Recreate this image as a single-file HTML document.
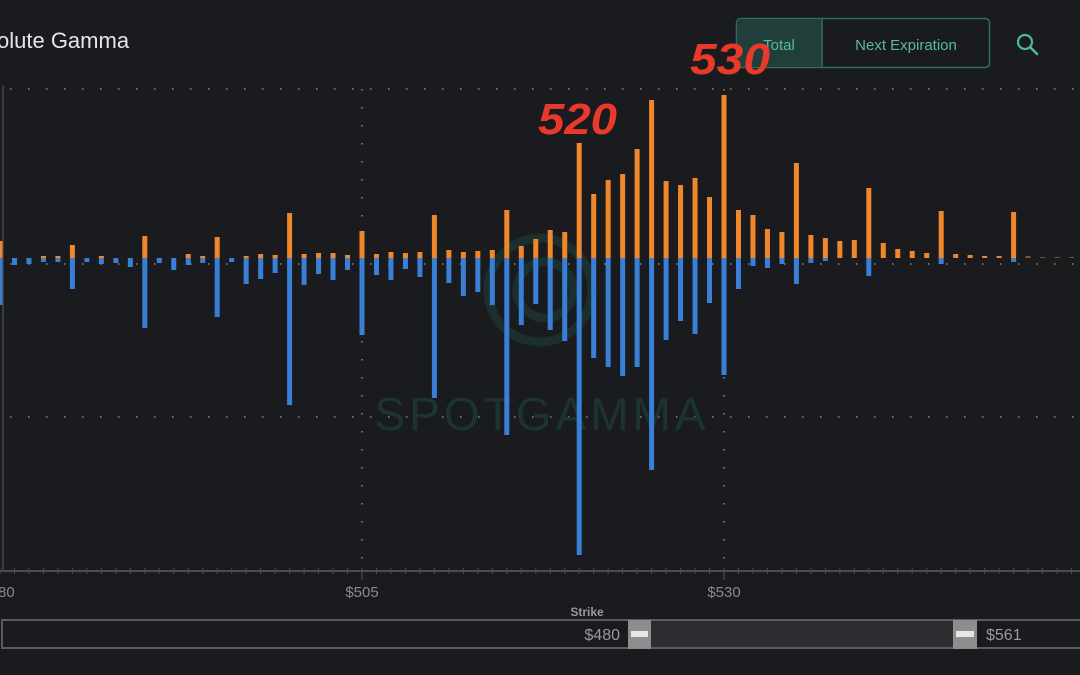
<!DOCTYPE html>
<html><head><meta charset="utf-8"><style>
html,body{margin:0;padding:0;background:#1a1b1f;width:1080px;height:675px;overflow:hidden;font-family:"Liberation Sans",sans-serif}
</style></head><body>
<svg id="s" width="1080" height="675" viewBox="0 0 1080 675" xmlns="http://www.w3.org/2000/svg" style="position:absolute;left:0;top:0">
<rect width="1080" height="675" fill="#1a1b1f"/>
<text x="-3" y="48" fill="#e6e6e6" font-size="22" font-family="Liberation Sans, sans-serif">olute Gamma</text>
<rect x="736.5" y="18.5" width="253" height="49" rx="4" fill="none" stroke="#2f6d63" stroke-width="1.5"/>
<rect x="737" y="19" width="85" height="48" rx="3" fill="#213e3a"/>
<line x1="822" y1="19" x2="822" y2="67" stroke="#2f6d63" stroke-width="1.5"/>
<text x="779" y="50" fill="#56b9a6" font-size="15" text-anchor="middle">Total</text>
<text x="906" y="50" fill="#56b9a6" font-size="15" text-anchor="middle">Next Expiration</text>
<circle cx="1025" cy="42" r="7" fill="none" stroke="#4db7a4" stroke-width="2.2"/>
<line x1="1030" y1="47" x2="1037" y2="54" stroke="#4db7a4" stroke-width="2.6" stroke-linecap="round"/>
<g stroke="#8a8a8a" stroke-width="1.5" stroke-dasharray="1.5 16.5" fill="none">
<line x1="10" y1="89" x2="1080" y2="89"/>
<line x1="10" y1="264" x2="1080" y2="264"/>
<line x1="10" y1="417" x2="1080" y2="417"/>
<line x1="362" y1="89" x2="362" y2="560"/>
<line x1="724" y1="89" x2="724" y2="560"/>
</g>
<line x1="3" y1="85" x2="3" y2="571" stroke="#3a3b3f" stroke-width="2"/>
<g fill="none" stroke="#1c3331" stroke-width="9" opacity="0.85">
<circle cx="540" cy="290" r="52"/>
<circle cx="545" cy="290" r="28"/>
</g>
<text x="542" y="430" fill="#1c3331" font-size="46" text-anchor="middle" letter-spacing="4" font-weight="300">SPOTGAMMA</text>
<g id="bars"></g>
<line x1="0" y1="571" x2="1080" y2="571" stroke="#4a4b4f" stroke-width="2"/>
<g id="ticks" stroke="#4a4b4f" stroke-width="1"></g>
<line x1="362" y1="571" x2="362" y2="580" stroke="#555" stroke-width="1"/>
<line x1="724" y1="571" x2="724" y2="580" stroke="#555" stroke-width="1"/>
<text x="-2" y="597" fill="#8a8a8a" font-size="15">80</text>
<text x="362" y="597" fill="#8a8a8a" font-size="15" text-anchor="middle">$505</text>
<text x="724" y="597" fill="#8a8a8a" font-size="15" text-anchor="middle">$530</text>
<text x="587" y="616" fill="#9a9a9a" font-size="12" font-weight="bold" text-anchor="middle">Strike</text>
<rect x="2" y="620" width="1085" height="28" fill="none" stroke="#5a5b5f" stroke-width="2"/>
<rect x="651" y="621" width="302" height="26" fill="#2c2d31"/>
<rect x="628" y="620" width="23" height="29" fill="#8d8d8d"/>
<rect x="631" y="631" width="17" height="6" fill="#e6e6e6"/>
<rect x="953" y="620" width="24" height="29" fill="#8d8d8d"/>
<rect x="956" y="631" width="18" height="6" fill="#e6e6e6"/>
<text x="620" y="640" fill="#9a9a9a" font-size="16" text-anchor="end">$480</text>
<text x="986" y="640" fill="#9a9a9a" font-size="16">$561</text>
<text x="538" y="134" fill="#e8392a" font-size="44" font-weight="bold" font-style="italic" textLength="79" lengthAdjust="spacingAndGlyphs">520</text>
<text x="690" y="74" fill="#e8392a" font-size="44" font-weight="bold" font-style="italic" textLength="80" lengthAdjust="spacingAndGlyphs">530</text>
</svg>
<script>
var o=[241,258,258,256,256,245,258,256,258,258,236,258,258,254,256,237,258,256,254,255,213,254,253,253,255,231,254,252,253,252,215,250,252,251,250,210,246,239,230,232,143,194,180,174,149,100,181,185,178,197,95,210,215,229,232,163,235,238,241,240,188,243,249,251,253,211,254,255,256,256,212,256,257,257,257];
var b=[305,265,264,262,262,289,262,264,263,267,328,263,270,265,263,317,262,284,279,273,405,285,274,280,270,335,275,280,269,277,398,283,296,292,305,435,325,304,330,341,555,358,367,376,367,470,340,321,334,303,375,289,266,268,264,284,263,261,258,258,276,258,258,258,258,264,258,258,258,258,262,258,258,258,258];
var z=258,h='';
for(var i=0;i<o.length;i++){var x=i*14.48-2.5;
if(o[i]<z)h+='<rect x="'+x+'" y="'+o[i]+'" width="5" height="'+(z-o[i])+'" fill="#f0872b" opacity="'+(i>70?0.5:1)+'"/>';
if(b[i]>z)h+='<rect x="'+x+'" y="'+z+'" width="5" height="'+(b[i]-z)+'" fill="#3a7fd6"/>';}
document.getElementById('bars').innerHTML=h;
var t='';for(var i=0;i<76;i++){var x=i*14.48;t+='<line x1="'+x+'" y1="568" x2="'+x+'" y2="574"/>';}
document.getElementById('ticks').innerHTML=t;
</script>
</body></html>
